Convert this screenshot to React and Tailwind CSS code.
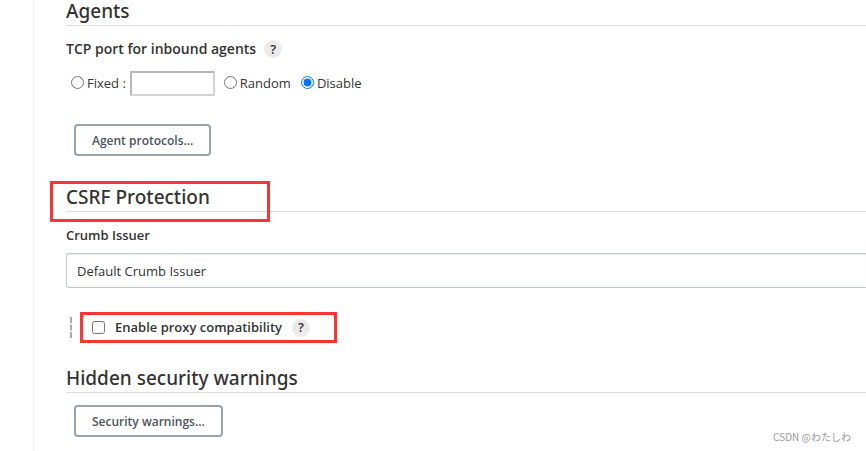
const SectionTitle = ({ children }) => (
  <h2 className="h-[26px] border-b border-[#dcdcdc] font-['Noto_Sans','Open_Sans',sans-serif] text-[19px] leading-[22px] font-medium text-[#333]">
    {children}
  </h2>
);

const HelpButton = ({ label }) => (
  <button
    type="button"
    aria-label={label}
    className="flex size-[18px] items-center justify-center rounded-full bg-[#ebebeb] text-[13px] leading-none font-semibold text-[#333]"
  >
    ?
  </button>
);

const OutlineButton = ({ children }) => (
  <button
    type="button"
    className="ml-2 block h-8 rounded-[4px] border-2 border-[#98a3ad] bg-white px-4 pt-px text-xs font-semibold text-[#4d545d]"
  >
    {children}
  </button>
);

const PortOption = ({ label, ...props }) => (
  <label className="flex items-center gap-[3px]">
    <input type="radio" name="slaveAgentPort" className="mb-[3px] size-[13px]" {...props} />
    {label}
  </label>
);

// Red frame drawn over the highlighted settings
const Highlight = ({ className }) => (
  <span aria-hidden="true" className={`pointer-events-none absolute border-3 border-[#f93636] ${className}`} />
);

const App = () => {
  return (
    <div className="relative flex min-h-screen bg-white font-['Open_Sans','Noto_Sans',sans-serif] text-sm text-[#333]">
      <div className="w-[34px] shrink-0 border-r border-[#f0f0f0]" />

      <main className="min-w-0 flex-1 pl-8">
        <section>
          <SectionTitle>Agents</SectionTitle>
          <div className="mt-3.5 flex items-center gap-2">
            <span className="text-sm leading-[18px] font-semibold">TCP port for inbound agents</span>
            <HelpButton label="Help for TCP port for inbound agents" />
          </div>
          <div className="mt-[13px] flex h-[25px] items-center pl-[5px] text-[13px]">
            <PortOption label="Fixed :" />
            <input
              type="text"
              aria-label="Fixed port"
              className="mr-[9px] ml-1 h-[25px] w-[85px] border-2 border-t-[#b8b8b8] border-r-[#d4d4d4] border-b-[#d4d4d4] border-l-[#b8b8b8] px-1"
            />
            <PortOption label="Random" />
            <span className="w-[10px]" />
            <PortOption label="Disable" defaultChecked />
          </div>
          <div className="mt-7">
            <OutlineButton>Agent protocols...</OutlineButton>
          </div>
        </section>

        <section className="mt-[30px]">
          <div className="relative">
            <SectionTitle>CSRF Protection</SectionTitle>
            <Highlight className="-top-[5px] -left-4 h-[41px] w-[220px]" />
          </div>
          <label htmlFor="crumbIssuer" className="mt-3.5 block text-[13px] leading-[18px] font-semibold">
            Crumb Issuer
          </label>
          <select
            id="crumbIssuer"
            className="mt-[9px] block h-[35px] w-full appearance-none rounded-l-[3px] border border-r-0 border-[#c0c8cf] bg-white px-2.5 pt-px text-[13px] shadow-[inset_0_1px_1px_#e8ebee]"
          >
            <option>Default Crumb Issuer</option>
          </select>
          <div className="mt-6 flex h-[31px] items-center pl-1">
            <span className="h-[21px] w-0 border-l-2 border-dashed border-[#aaa]" />
            <div className="relative ml-2 flex h-[31px] w-[257px] items-center gap-2.5 pl-3">
              <label className="flex items-center gap-2.5 text-[13px] font-semibold">
                <input type="checkbox" className="size-[13px]" />
                Enable proxy compatibility
              </label>
              <HelpButton label="Help for Enable proxy compatibility" />
              <Highlight className="inset-0" />
            </div>
          </div>
        </section>

        <section className="mt-6">
          <SectionTitle>Hidden security warnings</SectionTitle>
          <div className="mt-3">
            <OutlineButton>Security warnings...</OutlineButton>
          </div>
        </section>
      </main>

      <span className="absolute right-[15px] bottom-2 font-['Noto_Sans_CJK_JP',sans-serif] text-[10px] leading-3 text-[#999]">
        CSDN @わたしわ
      </span>
    </div>
  );
};

export default App;
